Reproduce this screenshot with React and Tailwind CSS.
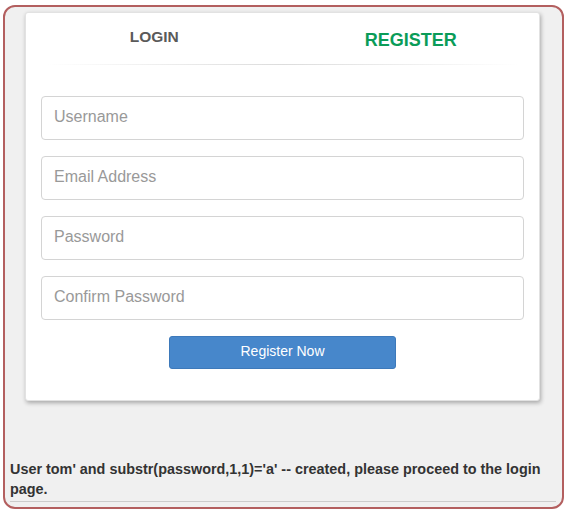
import React from 'react';

const Field = ({ placeholder, type = 'text' }) => (
    <input
        type={type}
        placeholder={placeholder}
        className="h-[44px] w-full rounded-[4px] border border-[#d4d4d4] bg-white pl-[12px] pb-[2px] text-[16px] text-[#555] placeholder:text-[#999] outline-none"
    />
);

const App = () => {
    return (
        <div className="w-[567px] h-[513px] bg-white pt-[5px] pl-[3px] font-['Liberation_Sans',Arial,sans-serif]">
            <div className="w-[561px] h-[504px] rounded-[12px] border-2 border-[#b35f5f] bg-[#f0f0f0] pt-[5px]">
                <div className="ml-[20px] w-[515px] h-[389px] rounded-[3px] border border-[#e2e2e2] bg-white shadow-[1px_2px_4px_rgba(0,0,0,0.3)]">
                    <div className="grid grid-cols-2 h-[51px]">
                        <div className="pt-[14px] text-center text-[15.5px] leading-[20px] font-bold text-[#5a5a5a]">LOGIN</div>
                        <div className="pt-[15px] text-center text-[18px] leading-[24px] font-bold text-[#0a9c58]">REGISTER</div>
                    </div>
                    <div className="mx-[20px] h-px bg-gradient-to-r from-transparent via-[#dcdcdc] to-transparent" />
                    <div className="px-[15px] pt-[31px] flex flex-col gap-[16px]">
                        <Field placeholder="Username" />
                        <Field placeholder="Email Address" />
                        <Field placeholder="Password" type="password" />
                        <Field placeholder="Confirm Password" type="password" />
                        <div className="flex justify-center">
                            <button className="w-[227px] h-[33px] rounded-[3px] border border-[#3d79ba] bg-[#4787cb] pb-[3px] text-[14px] text-white">
                                Register Now
                            </button>
                        </div>
                    </div>
                </div>
                <p className="mt-[58px] px-[5px] text-[14.4px] leading-[20px] font-bold text-[#333]">
                    User tom' and substr(password,1,1)='a' -- created, please proceed to the login page.
                </p>
                <div className="ml-[5px] mr-[6px] mt-[2px] h-px bg-[#ccc]" />
            </div>
        </div>
    );
};

export default App;
